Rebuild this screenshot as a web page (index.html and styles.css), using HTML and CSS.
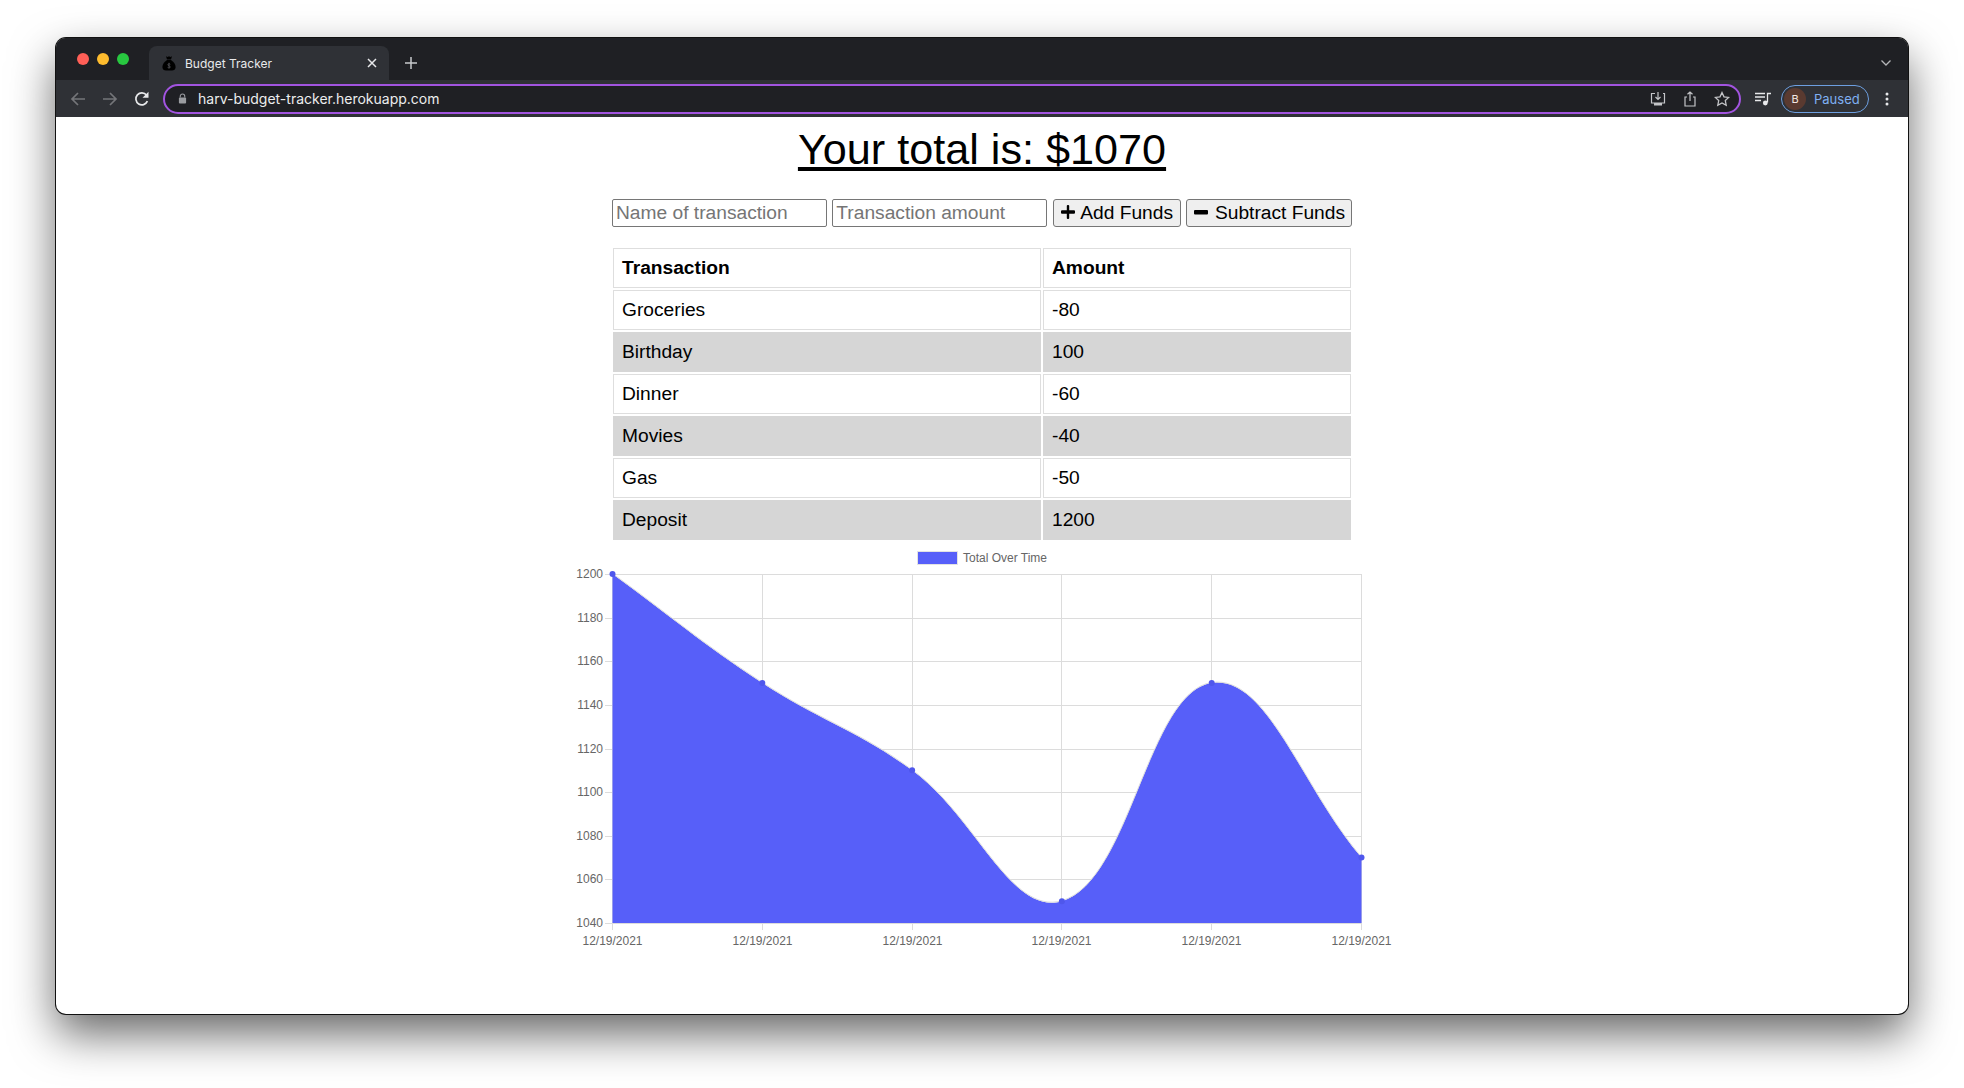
FILE: index.html
```html
<!DOCTYPE html>
<html lang="en">
<head>
<meta charset="utf-8">
<title>Budget Tracker</title>
<link rel="stylesheet" href="styles.css">
</head>
<body>
<div class="window">
  <header class="chrome">
    <div class="tabstrip">
      <div class="lights"><span class="light red"></span><span class="light amber"></span><span class="light green"></span></div>
      <div class="tab">
        <svg class="favicon" viewBox="0 0 14 16" width="14" height="16"><path d="M4 1.2 5.6 2l1.4-.8L8.400 2 10 1.200 9 4.400H5Z" fill="#000"/><path d="M5 5h4c2.600 1.600 4.600 4.400 4.600 7 0 2.400-1.600 3.600-3.600 3.600H4C2 15.600.4 14.400.4 12 .4 9.400 2.400 6.600 5 5Z" fill="#000"/><path d="M7 7.800v5.400M8.300 9.300C7.800 8.700 5.800 8.700 5.800 9.800s2.500.9 2.500 2.200-2.100 1.100-2.700.4" stroke="#55565a" stroke-width=".8" fill="none"/></svg>
        <span class="tab-title">Budget Tracker</span>
        <svg class="tab-close" viewBox="0 0 10 10" width="10" height="10"><path d="M1 1l8 8M9 1l-8 8" stroke="#e8e9eb" stroke-width="1.500"/></svg>
      </div>
      <svg class="new-tab" viewBox="0 0 12 12" width="12" height="12"><path d="M6 0v12M0 6h12" stroke="#c8c9cc" stroke-width="1.500"/></svg>
      <svg class="tab-menu" viewBox="0 0 10 6" width="10" height="6"><path d="M.5.500 5 5 9.500.500" stroke="#b5b6b9" stroke-width="1.300" fill="none"/></svg>
    </div>
    <div class="toolbar">
      <svg class="nav" viewBox="0 0 16 16" width="16" height="16"><path d="M15 8H2M8 2 2 8l6 6" stroke="#747579" stroke-width="1.700" fill="none"/></svg>
      <svg class="nav" viewBox="0 0 16 16" width="16" height="16"><path d="M1 8h13M8 2l6 6-6 6" stroke="#747579" stroke-width="1.700" fill="none"/></svg>
      <svg class="nav" viewBox="0 0 16 16" width="16" height="16"><path d="M13.400 10.200A6 6 0 1 1 12.500 4" stroke="#e8e9eb" stroke-width="1.700" fill="none"/><path d="M14.500.800v6h-6Z" fill="#e8e9eb"/></svg>
      <div class="omnibox">
        <svg class="lock" viewBox="0 0 10 12" width="9" height="11"><path d="M2.500 5V3.500a2.500 2.500 0 0 1 5 0V5" stroke="#9a9ca0" stroke-width="1.200" fill="none"/><rect x="1" y="5" width="8" height="6.500" rx="1" fill="#9a9ca0"/></svg>
        <span class="url">harv-budget-tracker.herokuapp.com</span>
        <svg class="omni-icon" viewBox="0 0 16 16" width="16" height="16"><path d="M5 2.500H1.500v9.500h13V2.500H13M8 1v7M5.500 6 8 8.500 10.500 6" stroke="#c4c5c8" stroke-width="1.200" fill="none"/><rect x="4" y="12" width="8" height="2.500" fill="#c4c5c8"/></svg>
        <svg class="omni-icon" viewBox="0 0 16 16" width="16" height="16"><path d="M5 6H3v9h10V6h-2M8 10V1M5.500 3.300 8 1l2.500 2.300" stroke="#c4c5c8" stroke-width="1.200" fill="none"/></svg>
        <svg class="omni-icon" viewBox="0 0 16 16" width="16" height="16"><path d="m8 1.500 2 4.300 4.700.6-3.400 3.200.9 4.700L8 12l-4.200 2.300.9-4.700L1.300 6.400 6 5.800Z" stroke="#c4c5c8" stroke-width="1.300" fill="none"/></svg>
      </div>
      <svg class="queue" viewBox="0 0 16 14" width="16" height="14"><path d="M0 1.500h10M0 5h10M0 8.500h6" stroke="#e8e9eb" stroke-width="1.300"/><path d="M12.500 10.500V1.500H16" stroke="#e8e9eb" stroke-width="1.300" fill="none"/><circle cx="10.300" cy="11" r="2.400" fill="#e8e9eb"/></svg>
      <div class="profile"><span class="avatar">B</span><span class="paused">Paused</span></div>
      <svg class="dots" viewBox="0 0 4 14" width="4" height="14"><circle cx="2" cy="2" r="1.500"/><circle cx="2" cy="7" r="1.500"/><circle cx="2" cy="12" r="1.500"/></svg>
    </div>
  </header>
  <main class="page">
    <h1 class="total">Your total is: $1070</h1>
    <form class="entry">
      <input class="field" type="text" placeholder="Name of transaction">
      <input class="field" type="text" placeholder="Transaction amount">
      <button class="btn btn-add" type="button"><svg viewBox="0 0 16 14" width="16" height="14"><path d="M6.800.800a1 1 0 0 1 1-.8h.4a1 1 0 0 1 1 .8v4.400h4.800a1 1 0 0 1 1 1v1.600a1 1 0 0 1-1 1H9.200v4.400a1 1 0 0 1-1 .8h-.4a1 1 0 0 1-1-.8V8.800H2a1 1 0 0 1-1-1V6.200a1 1 0 0 1 1-1h4.800Z"/></svg>Add Funds</button>
      <button class="btn btn-sub" type="button"><svg viewBox="0 0 16 14" width="16" height="14"><rect x="1" y="5" width="14" height="4.400" rx="1"/></svg>Subtract Funds</button>
    </form>
    <table class="ledger">
      <thead><tr><th class="col-name">Transaction</th><th class="col-amount">Amount</th></tr></thead>
      <tbody>
        <tr><td>Groceries</td><td>-80</td></tr>
        <tr><td>Birthday</td><td>100</td></tr>
        <tr><td>Dinner</td><td>-60</td></tr>
        <tr><td>Movies</td><td>-40</td></tr>
        <tr><td>Gas</td><td>-50</td></tr>
        <tr><td>Deposit</td><td>1200</td></tr>
      </tbody>
    </table>
    <svg class="chart" viewBox="562 540 840 420" width="840" height="420">
      <rect class="legend-box" x="917.500" y="551.500" width="40" height="13"/>
      <text class="legend" x="963" y="562">Total Over Time</text>
      <g class="grid">
        <path d="M605 574.500H1361.500M605 618.500H1361.500M605 661.500H1361.500M605 705.500H1361.500M605 749.500H1361.500M605 792.500H1361.500M605 836.500H1361.500M605 879.500H1361.500M605 923.500H1361.500"/>
        <path d="M612.500 574V930M762.500 574V930M912.500 574V930M1061.500 574V930M1211.500 574V930M1361.500 574V930"/>
      </g>
      <path class="area" d="M612.500 574C672.400 617.600 700.400 642.400 762.300 683C820.200 721 856.300 729.600 912.100 770.300C976.100 816.900 1010.500 916.200 1061.900 901.200C1130.300 881.300 1147.600 692.300 1211.700 683C1267.400 674.900 1301.600 787.800 1361.500 857.600V923H612.500Z"/>
      <path class="area-line" d="M612.500 574C672.400 617.600 700.400 642.400 762.300 683C820.200 721 856.300 729.600 912.100 770.300C976.100 816.900 1010.500 916.200 1061.900 901.200C1130.300 881.300 1147.600 692.300 1211.700 683C1267.400 674.900 1301.600 787.800 1361.500 857.600"/>
      <g class="pts">
        <circle cx="612.500" cy="574" r="3"/><circle cx="762.300" cy="683" r="3"/><circle cx="912.100" cy="770.300" r="3"/><circle cx="1061.900" cy="901.200" r="3"/><circle cx="1211.700" cy="683" r="3"/><circle cx="1361.500" cy="857.600" r="3"/>
      </g>
      <g class="ylabels">
        <text x="603" y="578">1200</text><text x="603" y="622">1180</text><text x="603" y="665">1160</text><text x="603" y="709">1140</text><text x="603" y="753">1120</text><text x="603" y="796">1100</text><text x="603" y="840">1080</text><text x="603" y="883">1060</text><text x="603" y="927">1040</text>
      </g>
      <g class="xlabels">
        <text x="612.500" y="945">12/19/2021</text><text x="762.500" y="945">12/19/2021</text><text x="912.500" y="945">12/19/2021</text><text x="1061.500" y="945">12/19/2021</text><text x="1211.500" y="945">12/19/2021</text><text x="1361.500" y="945">12/19/2021</text>
      </g>
    </svg>
  </main>
</div>
</body>
</html>
```
FILE: styles.css
```css
* { box-sizing: border-box; }
html, body { margin: 0; height: 100%; }
body {
  background: #fff;
  padding: 38px 56px 0;
  overflow: hidden;
  font-family: "Liberation Sans", Arial, sans-serif;
  color: #000;
}
.window {
  width: 1852px;
  height: 976px;
  background: #fff;
  border-radius: 10px;
  box-shadow: 0 0 0 1px #111, 0 20px 45px rgba(0, 0, 0, .6);
  display: flex;
  flex-direction: column;
}
.chrome { border-radius: 10px 10px 0 0; background: #1f2024; }
.tabstrip {
  height: 42px;
  display: flex;
  align-items: flex-start;
  padding-left: 21px;
  border-radius: 10px 10px 0 0;
  background: #1f2024;
}
.lights { display: flex; gap: 8px; margin-top: 15px; width: 72px; }
.light { width: 12px; height: 12px; border-radius: 50%; }
.red { background: #ff5f57; }
.amber { background: #febc2e; }
.green { background: #28c840; }
.tab {
  width: 240px;
  height: 34px;
  margin-top: 8px;
  background: #2f3136;
  border-radius: 8px 8px 0 0;
  display: flex;
  align-items: center;
  padding: 0 12px 0 13px;
  color: #e8e9eb;
}
.favicon { flex: none; }
.tab-title { font: 12px Inter, sans-serif; margin-left: 9px; flex: 1; }
.new-tab { margin: 19px 0 0 16px; }
.tab-menu { margin: 22px 17px 0 auto; }
.toolbar {
  height: 37px;
  background: #2f3136;
  display: flex;
  align-items: center;
  padding-left: 14px;
  gap: 16px;
}
.nav { flex: none; }
.omnibox {
  width: 1578px;
  height: 30px;
  margin-left: -3px;
  border: 2px solid #a254e0;
  border-radius: 15px;
  background: #1f2024;
  display: flex;
  align-items: center;
  padding: 0 9px 0 13px;
  gap: 16px;
}
.lock { flex: none; }
.url { font: 14px Inter, sans-serif; color: #eceded; flex: 1; margin-left: -5px; }
.omni-icon { flex: none; }
.queue { flex: none; margin-left: -2px; }
.profile {
  width: 88px;
  height: 28px;
  margin-left: -6px;
  border: 1px solid #6d9fe0;
  border-radius: 14px;
  display: flex;
  align-items: center;
  padding-left: 2px;
  gap: 8px;
}
.avatar {
  width: 22px;
  height: 22px;
  border-radius: 50%;
  background: #5a3a30;
  color: #f2e6e2;
  font: 11px/22px Inter, sans-serif;
  text-align: center;
}
.paused { font: 13px Inter, sans-serif; color: #7fb0f2; }
.dots { fill: #e8e9eb; }
.page { display: flex; flex-direction: column; align-items: center; }
.total {
  font-size: 43.200px;
  font-weight: 400;
  line-height: 52px;
  margin: 6px 0 0;
  text-decoration: underline;
}
.entry { display: flex; gap: 5.330px; margin-top: 24px; }
.field {
  width: 215px;
  height: 28px;
  padding: 1px 3px;
  border: 1px solid #767676;
  border-radius: 2px;
  font: 19.200px "Liberation Sans", Arial, sans-serif;
}
.field::placeholder { color: #757575; }
.btn {
  height: 28px;
  padding: 0;
  background: #efefef;
  border: 1px solid #767676;
  border-radius: 3px;
  font: 19.200px "Liberation Sans", Arial, sans-serif;
  color: #000;
  display: flex;
  align-items: center;
  justify-content: center;
  gap: 4px;
  white-space: nowrap;
}
.btn-add { width: 128px; }
.btn-sub { width: 166px; gap: 6px; }
.btn svg { fill: #000; margin-top: -3px; }
.ledger {
  width: 742px;
  margin-top: 19px;
  border-collapse: separate;
  border-spacing: 2px;
  table-layout: fixed;
  font-size: 19.200px;
}
.col-name { width: 428px; }
th, td {
  height: 40px;
  padding: 8px;
  line-height: 22px;
  border: 1px solid #dedede;
  text-align: left;
}
th { font-weight: 700; }
tbody tr:nth-child(even) td { background: #d6d6d6; border-color: #d6d6d6; }
.chart { display: block; flex: none; margin-top: -2px; }
.chart text { font: 12px "Liberation Sans", Arial, sans-serif; fill: #666; }
.legend-box { fill: #575ff9; stroke: #e3e3e3; stroke-width: 1; }
.grid path { stroke: #dcdcdc; stroke-width: 1; fill: none; }
.area { fill: #575ff9; }
.area-line { fill: none; stroke: #dcdcdc; stroke-width: 1; transform: translateY(-.5px); }
.pts circle { fill: #4f57ec; }
.ylabels text { text-anchor: end; }
.xlabels text { text-anchor: middle; }
```
